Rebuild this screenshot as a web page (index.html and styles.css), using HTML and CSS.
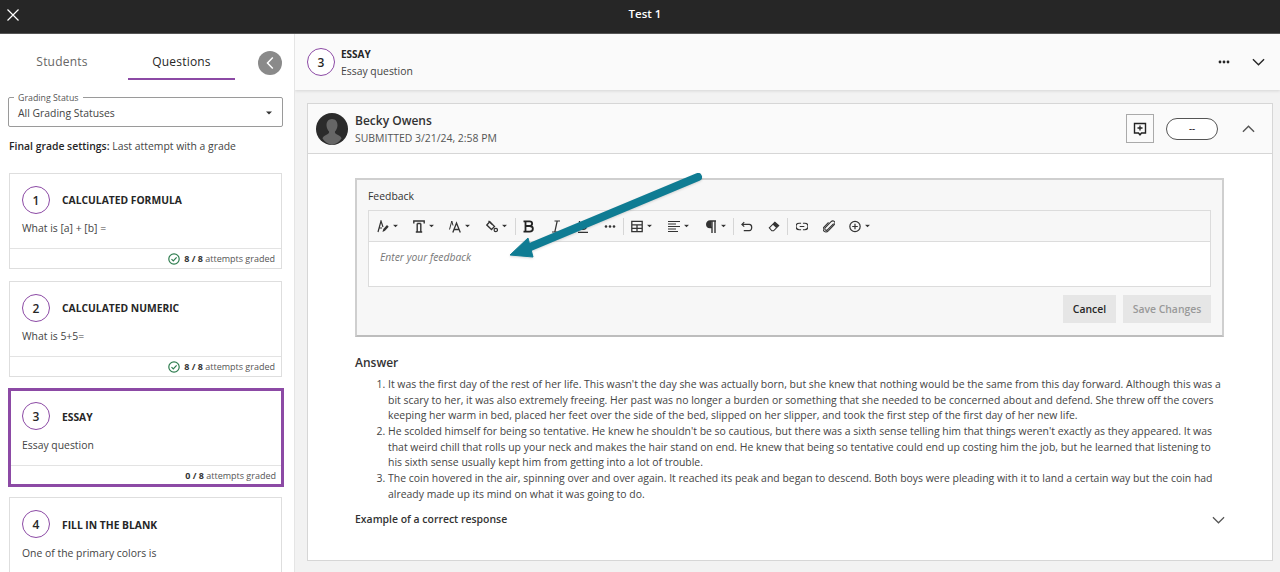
FILE: index.html
```html
<!DOCTYPE html>
<html lang="en">
<head>
<meta charset="utf-8">
<title>Test 1</title>
<link rel="stylesheet" href="styles.css">
</head>
<body>
<svg width="0" height="0" class="defs">
  <symbol id="check" viewBox="0 0 12 12"><circle cx="6" cy="6" r="5.2" fill="none" stroke="#2e7d4f" stroke-width="1.2"/><path d="M3.500 6.200 5.300 8l3.300-3.600" fill="none" stroke="#2e7d4f" stroke-width="1.200"/></symbol>
  <symbol id="caret" viewBox="0 0 6 4"><path d="M0 .5h6L3 3.500z" fill="#333"/></symbol>
</svg>
<header class="topbar">
  <svg class="close" width="12" height="12" viewBox="0 0 12 12"><path d="M.5.500l11 11M11.500.500l-11 11" stroke="#fff" stroke-width="1.200" fill="none"/></svg>
  <div class="title">Test 1</div>
</header>
<div class="layout">
  <aside class="sidebar">
    <div class="tabs">
      <div class="tab students">Students</div>
      <div class="tab questions">Questions</div>
      <button class="back"><svg width="8" height="14" viewBox="0 0 8 14"><path d="M6.800 1.500 1.500 7l5.300 5.500" fill="none" stroke="#fff" stroke-width="1.500"/></svg></button>
    </div>
    <div class="select">
      <span class="select-label">Grading Status</span>
      <span class="select-value">All Grading Statuses</span>
      <svg class="caret" width="6" height="4"><use href="#caret"/></svg>
    </div>
    <p class="settings"><b>Final grade settings:</b> Last attempt with a grade</p>

    <article class="qcard">
      <div class="qhead"><span class="num">1</span><h3>CALCULATED FORMULA</h3></div>
      <p class="qtext">What is [a] + [b] =</p>
      <div class="qfoot"><svg width="12" height="12"><use href="#check"/></svg><span><b>8 / 8</b> attempts graded</span></div>
    </article>
    <article class="qcard">
      <div class="qhead"><span class="num">2</span><h3>CALCULATED NUMERIC</h3></div>
      <p class="qtext">What is 5+5=</p>
      <div class="qfoot"><svg width="12" height="12"><use href="#check"/></svg><span><b>8 / 8</b> attempts graded</span></div>
    </article>
    <article class="qcard active">
      <div class="qhead"><span class="num">3</span><h3>ESSAY</h3></div>
      <p class="qtext">Essay question</p>
      <div class="qfoot"><span><b>0 / 8</b> attempts graded</span></div>
    </article>
    <article class="qcard">
      <div class="qhead"><span class="num">4</span><h3>FILL IN THE BLANK</h3></div>
      <p class="qtext">One of the primary colors is</p>
    </article>
  </aside>

  <main class="main">
    <div class="qbar">
      <span class="num">3</span>
      <div class="qbar-text"><strong>ESSAY</strong><span>Essay question</span></div>
      <svg class="dots" width="12" height="4" viewBox="0 0 12 4"><circle cx="2" cy="2" r="1.400"/><circle cx="6" cy="2" r="1.400"/><circle cx="10" cy="2" r="1.400"/></svg>
      <svg class="chev" width="13" height="8" viewBox="0 0 14 8"><path d="M1 1l6 6 6-6" fill="none" stroke="#262626" stroke-width="1.500"/></svg>
    </div>

    <section class="attempt">
      <div class="attempt-head">
        <svg class="avatar" width="32" height="32" viewBox="0 0 32 32"><circle cx="16" cy="16" r="16" fill="#2b2b2b"/><path d="M16 6c3.600 0 5.500 2.800 5.500 6.200 0 3-1.500 5.200-2.500 6.300-.6 1.500 1 2.600 3 3.500 2 .9 3 1.800 3.500 3.500A15.500 15.500 0 0 1 16 32a15.500 15.500 0 0 1-9.500-6.500c.5-1.700 1.500-2.600 3.500-3.500 2-.9 3.600-2 3-3.500-1-1.100-2.500-3.300-2.500-6.300C10.500 8.800 12.400 6 16 6z" fill="#666"/></svg>
        <div class="who"><div class="name">Becky Owens</div><div class="when">SUBMITTED 3/21/24, 2:58 PM</div></div>
        <button class="addfb"><svg width="14" height="14" viewBox="0 0 14 14"><path d="M1.500 1.500h11v9.500H8.500L7 12.800 5.500 11h-4z" fill="none" stroke="#222" stroke-width="1.400"/><path d="M7 3.500v5M4.500 6h5" stroke="#222" stroke-width="1.300"/></svg></button>
        <div class="pill">--</div>
        <svg class="chev-up" width="13" height="8" viewBox="0 0 14 8"><path d="M1 7l6-6 6 6" fill="none" stroke="#555" stroke-width="1.500"/></svg>
      </div>

      <div class="attempt-body">
        <div class="feedback">
          <div class="fb-label">Feedback</div>
          <div class="editor">
            <div class="toolbar">
              <span class="tool w36"><svg viewBox="0 0 12 13"><path d="M1 12 4 1l2 6M2 8h3" fill="none" stroke="#333" stroke-width="1.200"/><path d="M5.500 12l.8-3 3.700-4 1.700 1.700-3.700 4z" fill="#333"/></svg><svg class="cr" viewBox="0 0 6 4"><use href="#caret"/></svg></span>
              <span class="tool w36"><svg viewBox="0 0 12 13"><path d="M.8 3.500V1h10.400v2.500M4.200 3.500h3.600M4.200 3.500v8M7.800 3.500v8M2.800 12h6.400" fill="none" stroke="#333" stroke-width="1.400"/></svg><svg class="cr" viewBox="0 0 6 4"><use href="#caret"/></svg></span>
              <span class="tool w37"><svg viewBox="0 0 12 13"><path d="M.5 9.500 2.800 1 4 5.500" fill="none" stroke="#333" stroke-width="1"/><path d="M3.800 12.500 7.500 3l3.800 9.500M5 9.500h5" fill="none" stroke="#333" stroke-width="1.300"/></svg><svg class="cr" viewBox="0 0 6 4"><use href="#caret"/></svg></span>
              <span class="tool w29"><svg viewBox="0 0 12 13"><path d="M.8 5 3.800 1.800 8.500 6.500 5.500 9.500z" fill="none" stroke="#333" stroke-width="1.300"/><path d="M2.500.8 6 4.300" stroke="#333" stroke-width="1.200"/><circle cx="9.800" cy="10" r="1.700" fill="none" stroke="#333" stroke-width="1.200"/></svg><svg class="cr" viewBox="0 0 6 4"><use href="#caret"/></svg></span>
              <span class="sep"></span>
              <span class="tool w27"><svg viewBox="0 0 12 13"><path d="M.5 1.300h6c3.500 0 3.500 4.700 0 4.700 4.500 0 4.500 5.700 0 5.700h-6M2.500 1.300v10.400M2.500 6H7" fill="none" stroke="#222" stroke-width="1.800"/></svg></span>
              <span class="tool w27"><svg viewBox="0 0 12 13"><path d="M4.500 1h5.500M2 12h5.500M7.200 1 4.800 12" fill="none" stroke="#333" stroke-width="1.200"/></svg></span>
              <span class="tool w27"><svg viewBox="0 0 12 13"><path d="M2.500 1v5c0 4.500 7 4.500 7 0V1M1 12.300h10" fill="none" stroke="#333" stroke-width="1.300"/></svg></span>
              <span class="tool w19"><svg viewBox="0 0 12 4"><circle cx="2" cy="2" r="1.300" fill="#333"/><circle cx="6" cy="2" r="1.300" fill="#333"/><circle cx="10" cy="2" r="1.300" fill="#333"/></svg></span>
              <span class="sep"></span>
              <span class="tool w37"><svg viewBox="0 0 12 12"><path d="M.8.800h10.400v10.400H.8zM.8 4.300h10.400M.8 7.800h10.400M6 4.300v6.900" fill="none" stroke="#333" stroke-width="1.300"/></svg><svg class="cr" viewBox="0 0 6 4"><use href="#caret"/></svg></span>
              <span class="tool w37"><svg viewBox="0 0 12 12"><path d="M0 1h12M0 3.500h8M0 6h12M0 8.500h8M0 11h10" stroke="#333" stroke-width="1.100"/></svg><svg class="cr" viewBox="0 0 6 4"><use href="#caret"/></svg></span>
              <span class="tool w28"><svg viewBox="0 0 11 13"><path d="M10.500 1H4.500a3 3 0 0 0 0 6.500H6M6.500 1v12M9.500 1v12" fill="none" stroke="#333" stroke-width="1.400"/><path d="M6 1H4.500a3 3 0 0 0 0 6.500H6z" fill="#333"/></svg><svg class="cr" viewBox="0 0 6 4"><use href="#caret"/></svg></span>
              <span class="sep"></span>
              <span class="tool w27"><svg viewBox="0 0 13 11"><path d="M3.500.8 1 3.200l2.500 2.400M1 3.200h8c3.500 0 3.500 6.800 0 6.800H3" fill="none" stroke="#333" stroke-width="1.300"/></svg></span>
              <span class="tool w19"><svg viewBox="0 0 14 13"><path d="M1.500 8 8 1.500l4.500 4L6.500 11.500H4.500z" fill="none" stroke="#333" stroke-width="1.300"/><path d="M8 1.500l4.500 4-2.800 2.800-4.300-4.200z" fill="#333"/></svg></span>
              <span class="sep wide"></span>
              <span class="tool w27"><svg viewBox="0 0 13 9"><path d="M5.500 1H3.500a3.500 3.500 0 0 0 0 7h2M7.500 1h2a3.500 3.500 0 0 1 0 7h-2M4 4.500h5" fill="none" stroke="#333" stroke-width="1.300"/></svg></span>
              <span class="tool w26"><svg viewBox="0 0 13 14"><path d="M11.500 4 5 10.500c-1.800 1.800-4.200-.5-2.500-2.300L8.500 2c2.700-2.700 6 .5 3.500 3.200L6 11.500c-3.500 3.500-8-.8-4.700-4.200L6 2.500" fill="none" stroke="#333" stroke-width="1.100"/></svg></span>
              <span class="tool w37"><svg viewBox="0 0 13 13"><circle cx="6.500" cy="6.500" r="5.600" fill="none" stroke="#333" stroke-width="1.300"/><path d="M6.500 3.500v6M3.500 6.500h6" stroke="#333" stroke-width="1.300"/></svg><svg class="cr" viewBox="0 0 6 4"><use href="#caret"/></svg></span>
            </div>
            <div class="placeholder">Enter your feedback</div>
          </div>
          <div class="actions">
            <button class="btn">Cancel</button>
            <button class="btn disabled">Save Changes</button>
          </div>
        </div>

        <h4 class="answer">Answer</h4>
        <ol class="answers">
          <li>It was the first day of the rest of her life. This wasn't the day she was actually born, but she knew that nothing would be the same from this day forward. Although this was a bit scary to her, it was also extremely freeing. Her past was no longer a burden or something that she needed to be concerned about and defend. She threw off the covers keeping her warm in bed, placed her feet over the side of the bed, slipped on her slipper, and took the first step of the first day of her new life.</li>
          <li>He scolded himself for being so tentative. He knew he shouldn't be so cautious, but there was a sixth sense telling him that things weren't exactly as they appeared. It was that weird chill that rolls up your neck and makes the hair stand on end. He knew that being so tentative could end up costing him the job, but he learned that listening to his sixth sense usually kept him from getting into a lot of trouble.</li>
          <li>The coin hovered in the air, spinning over and over again. It reached its peak and began to descend. Both boys were pleading with it to land a certain way but the coin had already made up its mind on what it was going to do.</li>
        </ol>
        <div class="example"><span>Example of a correct response</span><svg width="13" height="8" viewBox="0 0 14 8"><path d="M1 1l6 6 6-6" fill="none" stroke="#555" stroke-width="1.300"/></svg></div>
      </div>
    </section>

    <svg class="arrow" width="200" height="90" viewBox="0 0 200 90"><path d="M193 4 18 77" stroke="#0f7c93" stroke-width="8" stroke-linecap="round" fill="none"/><path d="M5 82 23 65 28 84z" fill="#0f7c93" stroke="#0f7c93" stroke-width="1" stroke-linejoin="round"/></svg>
  </main>
</div>
</body>
</html>
```
FILE: styles.css
```css
* { box-sizing: border-box; }
html, body { margin: 0; height: 572px; overflow: hidden; }
body { font-family: "Open Sans", "Noto Sans", sans-serif; color: #262626; background: #fff; font-size: 10.4px; }
.defs { position: absolute; }
button { font-family: inherit; }

.topbar { height: 34px; background: #262626; display: flex; align-items: center; justify-content: center; position: relative; padding-bottom: 6px; border-bottom: 1px solid #555; }
.close { position: absolute; left: 7px; top: 9px; }
.title { color: #fff; font-size: 11.5px; font-weight: 600; margin-left: 10px; }

.layout { display: flex; height: 538px; }
.sidebar { width: 295px; flex: none; background: #fff; padding: 0 12px 0 8px; overflow: hidden; border-right: 1px solid #e5e5e5; }

.tabs { height: 47px; display: flex; position: relative; padding-top: 20px; }
.tab { font-size: 12px; line-height: 16px; text-align: center; height: 26px; }
.students { width: 120px; color: #666; padding-right: 12px; letter-spacing: .2px; }
.questions { width: 107px; color: #262626; font-weight: 500; border-bottom: 2.5px solid #8c4aa5; letter-spacing: .2px; }
.back { position: absolute; left: 250px; top: 17px; width: 24px; height: 24px; border-radius: 50%; border: 0; padding: 0; background: #8a8a8a; display: flex; align-items: center; justify-content: center; }

.select { margin-top: 16px; width: 275px; height: 30px; border: 1px solid #9a9a9a; border-radius: 2px; position: relative; display: flex; align-items: center; padding: 1px 9px 0; justify-content: space-between; }
.select-label { position: absolute; left: 5px; top: -5px; background: #fff; padding: 0 4px; font-size: 8.8px; line-height: 10px; color: #555; }
.select-value { font-size: 10.4px; color: #444; }
.caret { margin-right: 1px; }
.settings { margin: 12px 0 0 1px; font-size: 10.4px; line-height: 14px; color: #444; }
.settings b { color: #262626; font-weight: 600; }

.qcard { margin: 20px 0 0 1px; width: 273px; height: 96px; border: 1px solid #dedede; position: relative; display: flex; flex-direction: column; }
.qcard + .qcard { margin-top: 12px; }
.qcard.active { width: 276px; height: 99px; margin: 11px 0 0 0; border: 3px solid #8c4aa5; }
.qcard.active + .qcard { margin-top: 10px; }
.qhead { display: flex; align-items: center; gap: 12px; padding: 12px 0 0 12px; }
.active .qhead { padding: 11px 0 0 11px; }
.num { width: 28px; height: 28px; flex: none; border: 1.5px solid #8c4aa5; border-radius: 50%; display: flex; align-items: center; justify-content: center; font-size: 12px; font-weight: 600; color: #262626; background: #fff; }
h3 { margin: 0; font-size: 10.3px; font-weight: 700; color: #262626; }
.active h3, .active + .qcard h3 { margin-top: 1px; }
.qtext { margin: 7px 0 0 12px; font-size: 10.4px; line-height: 15px; color: #444; flex: 1; }
.active .qtext { margin: 8px 0 0 11px; }
.active + .qcard .qtext { margin-top: 8px; }
.qfoot { height: 20px; border-top: 1px solid #e3e3e3; display: flex; align-items: center; justify-content: flex-end; gap: 4px; padding-right: 6px; font-size: 9px; color: #555; }
.qfoot b { color: #333; font-weight: 700; }
.active .qfoot { height: 19px; padding-right: 5px; }

.main { flex: 1; background: #f2f2f2; position: relative; overflow: hidden; }
.qbar { height: 56px; background: #fafafa; display: flex; align-items: center; padding: 0 15px 0 12px; box-shadow: 0 1px 3px rgba(0,0,0,.12); position: relative; }
.qbar-text { margin-left: 6px; padding-top: 2px; display: flex; flex-direction: column; flex: 1; font-size: 10.4px; color: #444; line-height: 17px; }
.qbar-text strong { font-size: 10px; font-weight: 700; color: #262626; }
.dots { fill: #262626; margin-right: 22px; }

.attempt { position: relative; margin: 13px 7px 0 12px; height: 458px; background: #fff; border: 1px solid #d6d6d6; display: flex; flex-direction: column; }
.attempt-head { height: 50px; background: #fafafa; border-bottom: 1px solid #d6d6d6; display: flex; align-items: center; padding: 0 17px 0 8px; flex: none; }
.avatar { flex: none; }
.who { flex: 1; margin-left: 7px; }
.name { font-size: 12px; font-weight: 600; line-height: 17px; color: #333; margin-top: 1px; }
.when { font-size: 10.45px; line-height: 16px; margin-top: 1px; color: #555; }
.addfb { width: 28px; height: 29px; border: 1px solid #aaa; background: #fafafa; padding: 0; display: flex; align-items: center; justify-content: center; }
.pill { width: 52px; height: 22px; margin-left: 12px; border: 1px solid #555; border-radius: 11px; background: #fff; display: flex; align-items: center; justify-content: center; font-size: 9.5px; font-weight: 600; }
.chev-up { margin-left: 24px; }

.attempt-body { flex: 1; padding: 24px 47px 0 47px; position: relative; }
.feedback { width: 869px; height: 159px; border: 2px solid #cfcfcf; border-bottom-color: #bdbdbd; background: #f7f7f7; padding: 9px 11px 0 11px; }
.fb-label { font-size: 10.4px; line-height: 15px; color: #333; }
.editor { margin-top: 6px; border: 1px solid #dcdcdc; background: #fff; height: 77px; }
.toolbar { height: 31px; background: #f7f7f7; border-bottom: 1px solid #dcdcdc; display: flex; align-items: center; padding-left: 8px; }
.tool { display: flex; align-items: center; justify-content: flex-start; gap: 4px; flex: none; height: 100%; }
.tool > svg:first-child { width: 12px; height: 13px; flex: none; }
.tool > .cr { width: 5px; height: 4px; flex: none; }
.w19 { width: 19px; } .w26 { width: 26px; } .w27 { width: 27px; } .w28 { width: 28px; } .w29 { width: 29px; } .w36 { width: 36px; } .w37 { width: 37px; }
.sep { width: 1px; height: 17px; background: #d6d6d6; flex: none; margin-right: 7px; }
.sep.wide { margin-right: 8px; }
.placeholder { padding: 8px 11px; font-style: italic; font-size: 10.35px; line-height: 14px; color: #777; }
.actions { display: flex; justify-content: flex-end; gap: 7px; margin-top: 8px; }
.btn { height: 28px; border: 0; background: #e6e6e6; font-size: 10.4px; font-weight: 600; color: #262626; padding: 0; width: 53px; white-space: nowrap; }
.btn.disabled { width: 88px; color: #999; }

.answer { margin: 17px 0 0; font-size: 12px; font-weight: 600; line-height: 17px; color: #333; }
.answers { margin: 6px 0 0; padding: 0 0 0 33px; font-size: 10.45px; line-height: 15.67px; color: #444; }
.example { margin-top: 10px; display: flex; justify-content: space-between; align-items: center; font-weight: 600; font-size: 10.45px; line-height: 15px; color: #333; }

.arrow { position: absolute; left: 210px; top: 139px; filter: drop-shadow(0 1px 1px rgba(0,0,0,.15)); }
```
